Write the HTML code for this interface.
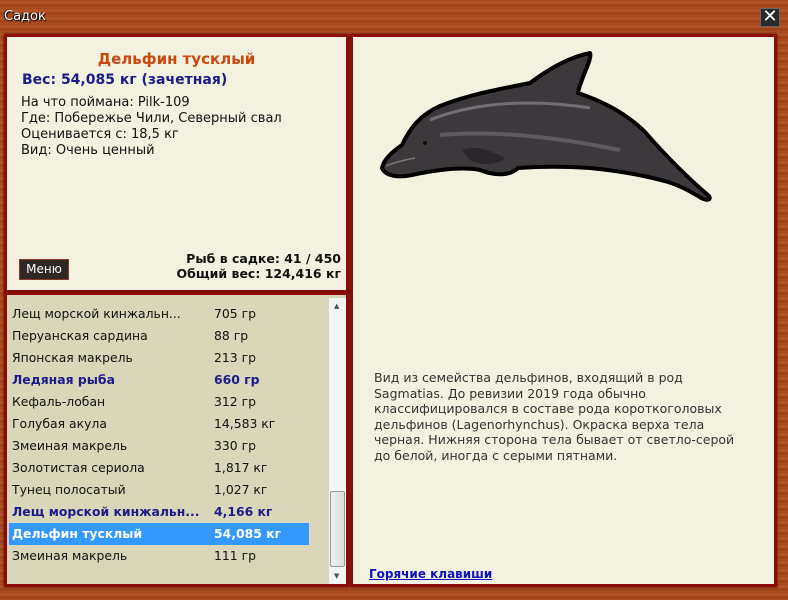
<!DOCTYPE html>
<html><head><meta charset="utf-8"><style>
*{margin:0;padding:0;box-sizing:border-box}
body{width:788px;height:600px;overflow:hidden;position:relative;font-family:"DejaVu Sans","Liberation Sans",sans-serif;font-size:12px;color:#111;
background:repeating-linear-gradient(180deg,#a4461c 0,#b8582a 3px,#9a3f18 5px,#ad4f22 8px);}
.title{position:absolute;left:4px;top:9px;color:#fff;font-size:13px;text-shadow:1px 1px 1px #000,-1px 0 1px #000}
.close{position:absolute;left:760px;top:8px;width:20px;height:19px;background:#2a2a2a;border:1px solid #666;color:#fff;font-size:18px;line-height:16px;text-align:center}
.panel{position:absolute;border:3px solid #8c0d08;box-shadow:0 0 2px #400}
#p1{left:4px;top:34px;width:345px;height:259px;background:#f3f2e0}
#p2{left:350px;top:34px;width:427px;height:553px;background:#f3f2e0}
#p3{left:4px;top:292px;width:345px;height:295px;background:#d9d6ba}
.h1{position:absolute;left:0;width:339px;top:13px;text-align:center;color:#c9480d;font-weight:bold;font-size:15px}
.h2{position:absolute;left:15px;top:35px;color:#1b1b8a;font-weight:bold;font-size:14px}
.info{position:absolute;left:14px;top:58px;line-height:16px;font-size:13px}
.menu{position:absolute;left:12px;top:222px;width:50px;height:21px;background:#2f2824;border:1px solid #8a3a2a;color:#fff;font-size:12px;text-align:center;line-height:19px}
.stats{position:absolute;right:5px;top:214px;text-align:right;font-weight:bold;font-size:12.5px;line-height:15px}
.row{position:absolute;left:5px;width:300px;height:22px;line-height:22px;font-size:12.4px}
.row span{position:absolute;left:202px}
.bold{color:#1b1b8a;font-weight:bold}
.sel{background:#3399ff;color:#fff;font-weight:bold;left:2px;padding-left:3px}
.sel span{left:205px}
.sb{position:absolute;left:322px;top:3px;width:17px;height:286px;background:#f4f4f2}
.thumb{position:absolute;left:1px;top:193px;width:15px;height:76px;background:linear-gradient(90deg,#eee,#ddd);border:1px solid #999;border-radius:2px}
.desc{position:absolute;left:21px;top:333px;width:400px;line-height:15.5px;color:#333;font-size:12.5px;white-space:nowrap}
.hot{position:absolute;left:16px;top:530px;color:#1010c0;font-weight:bold;text-decoration:underline;font-size:12px}
</style></head><body>
<div class="title">Садок</div>
<div class="close">✕</div>
<div class="panel" id="p1">
<div class="h1">Дельфин тусклый</div>
<div class="h2">Вес: 54,085 кг (зачетная)</div>
<div class="info">На что поймана: Pilk-109<br>Где: Побережье Чили, Северный свал<br>Оценивается с: 18,5 кг<br>Вид: Очень ценный</div>
<div class="menu">Меню</div>
<div class="stats">Рыб в садке: 41 / 450<br>Общий вес: 124,416 кг</div>
</div>
<div class="panel" id="p3">
<div class="row" style="top:8px">Лещ морской кинжальн...<span>705 гр</span></div>
<div class="row" style="top:30px">Перуанская сардина<span>88 гр</span></div>
<div class="row" style="top:52px">Японская макрель<span>213 гр</span></div>
<div class="row bold" style="top:74px">Ледяная рыба<span>660 гр</span></div>
<div class="row" style="top:96px">Кефаль-лобан<span>312 гр</span></div>
<div class="row" style="top:118px">Голубая акула<span>14,583 кг</span></div>
<div class="row" style="top:140px">Змеиная макрель<span>330 гр</span></div>
<div class="row" style="top:162px">Золотистая сериола<span>1,817 кг</span></div>
<div class="row" style="top:184px">Тунец полосатый<span>1,027 кг</span></div>
<div class="row bold" style="top:206px">Лещ морской кинжальн...<span>4,166 кг</span></div>
<div class="row sel" style="top:228px">Дельфин тусклый<span>54,085 кг</span></div>
<div class="row" style="top:250px">Змеиная макрель<span>111 гр</span></div>
<div class="sb"><div style="position:absolute;top:4px;left:5px;font-size:7px;color:#555">▲</div><div class="thumb"></div><div style="position:absolute;top:274px;left:5px;font-size:7px;color:#555">▼</div></div>
</div>
<div class="panel" id="p2">
<svg width="421" height="547" style="position:absolute;left:0;top:0" viewBox="353 37 421 547">
<path d="M382 168 C384 158 395 150 402 145 C410 128 420 115 440 106 C470 94 505 88 530 83 C550 68 570 57 590 53 C593 58 580 80 578 93 C605 102 628 115 645 132 C665 155 688 178 709 196 C712 201 705 201 698 196 C688 190 678 185 668 182 C640 174 610 170 590 168 C560 166 532 167 518 168 C510 176 495 176 480 170 C460 166 430 171 412 175 C398 178 385 176 382 168 Z" fill="#3c383c" stroke="#000" stroke-width="4" stroke-linejoin="round"/>
<path d="M430 120 C480 100 540 100 590 108" stroke="#8a868c" stroke-width="3" fill="none" opacity=".7"/>
<path d="M440 135 C500 130 560 138 620 150" stroke="#75717a" stroke-width="4" fill="none" opacity=".6"/>
<path d="M462 150 C475 145 490 150 505 158 C500 165 480 166 470 160 Z" fill="#2a272a"/>
<path d="M386 166 C395 162 405 160 415 158" stroke="#777" stroke-width="1.5" fill="none"/>
<circle cx="425" cy="143" r="2" fill="#111"/>
</svg>
<div class="desc">Вид из семейства дельфинов, входящий в род<br>Sagmatias. До ревизии 2019 года обычно<br>классифицировался в составе рода короткоголовых<br>дельфинов (Lagenorhynchus). Окраска верха тела<br>черная. Нижняя сторона тела бывает от светло-серой<br>до белой, иногда с серыми пятнами.</div>
<div class="hot">Горячие клавиши</div>
</div>
</body></html>
